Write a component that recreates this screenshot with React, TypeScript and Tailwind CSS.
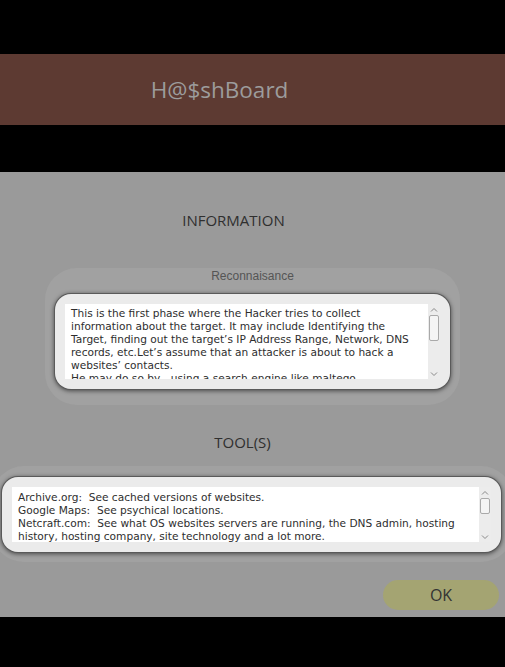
import { ReactNode } from 'react'

const recon = [
  'This is the first phase where the Hacker tries to collect',
  'information about the target. It may include Identifying the',
  'Target, finding out the target’s IP Address Range, Network, DNS',
  'records, etc.Let’s assume that an attacker is about to hack a',
  'websites’ contacts.',
  'He may do so by - using a search engine like maltego,',
]

const tools = [
  'Archive.org:  See cached versions of websites.',
  'Google Maps:  See psychical locations.',
  'Netcraft.com:  See what OS websites servers are running, the DNS admin, hosting',
  'history, hosting company, site technology and a lot more.',
]

function Scrollbar({ thumbTop }: { thumbTop: string }) {
  return (
    <div className="relative flex w-[12px] shrink-0 flex-col items-center bg-[#ececec]">
      <svg width="8" height="6" viewBox="0 0 8 6" className="mt-[3px]">
        <path d="M1 4.5 L4 1.5 L7 4.5" fill="none" stroke="#8a8a8a" strokeWidth="1" />
      </svg>
      <div className={`w-[10px] rounded-[2px] border border-[#a9a9a9] bg-[#f4f4f4] ${thumbTop}`} />
      <div className="flex-1" />
      <svg width="8" height="6" viewBox="0 0 8 6" className="mb-[2px]">
        <path d="M1 1.5 L4 4.5 L7 1.5" fill="none" stroke="#8a8a8a" strokeWidth="1" />
      </svg>
    </div>
  )
}

function TextBox({ lines, height, thumb, pt }: { lines: string[]; height: string; thumb: string; pt: string }) {
  return (
    <div className="rounded-[16px] bg-[#ebebeb] p-[10px] shadow-[0_0_0_1px_#5a5a5a,0_1px_4px_1px_rgba(0,0,0,0.55)]">
      <div className={`flex ${height}`}>
        <div className={`flex-1 overflow-hidden bg-white pl-[6px] ${pt}`}>
          {lines.map((l, i) => (
            <div key={i} className="whitespace-pre text-[10.6px] leading-[13px] text-[#2e2e2e]">
              {l}
            </div>
          ))}
        </div>
        <Scrollbar thumbTop={thumb} />
      </div>
    </div>
  )
}

function Heading({ children, shift }: { children: ReactNode; shift: string }) {
  return (
    <div className={`flex justify-center ${shift}`}>
      <span className="text-[15px] leading-[24px] text-[#2f2f2f]">{children}</span>
    </div>
  )
}

export default function App() {
  return (
    <div
      className="flex h-[667px] w-[505px] flex-col overflow-hidden bg-black"
      style={{ fontFamily: '"Open Sans", "Noto Sans", sans-serif' }}
    >
      <div className="h-[54px] shrink-0" />
      <div className="flex h-[71px] shrink-0 items-center justify-center bg-[#5d3a32] pr-[66px]">
        <span className="text-[22.5px] text-[#9c9c9c]">H@$shBoard</span>
      </div>
      <div className="h-[47px] shrink-0" />

      <div className="flex h-[445px] shrink-0 flex-col overflow-hidden bg-[#9a9a9a] pt-[36px]">
        <Heading shift="pr-[38px]">INFORMATION</Heading>

        <div className="mx-[45px] mt-[36px] rounded-[32px] bg-[#a1a1a1] px-[10px] pb-[16px]">
          <div
            className="pt-[1px] text-center text-[12px] leading-[14px] text-[#555555]"
            style={{ fontFamily: '"Liberation Sans", Arial, sans-serif' }}
          >
            Reconnaisance
          </div>
          <div className="mt-[11px]" style={{ fontFamily: '"DejaVu Sans", Verdana, sans-serif' }}>
            <TextBox lines={recon} height="h-[75px]" thumb="mt-[2px] h-[26px]" pt="pt-[3px]" />
          </div>
        </div>

        <div className="mt-[25px]">
          <Heading shift="pr-[20px]">TOOL(S)</Heading>
        </div>

        <div
          className="mx-[-8px] mt-[12px] rounded-[32px] bg-[#a1a1a1] pt-[11px] pb-[10px] pl-[10px] pr-[12px]"
          style={{ fontFamily: '"DejaVu Sans", Verdana, sans-serif' }}
        >
          <TextBox lines={tools} height="h-[55px]" thumb="mt-[2px] h-[16px]" pt="pt-[4px]" />
        </div>

        <div className="mt-[18px] flex justify-end pr-[6px]">
          <button className="h-[30px] w-[116px] rounded-full bg-[#a4a472] text-[16px] text-[#333333]">
            OK
          </button>
        </div>
      </div>

      <div className="flex-1" />
    </div>
  )
}
